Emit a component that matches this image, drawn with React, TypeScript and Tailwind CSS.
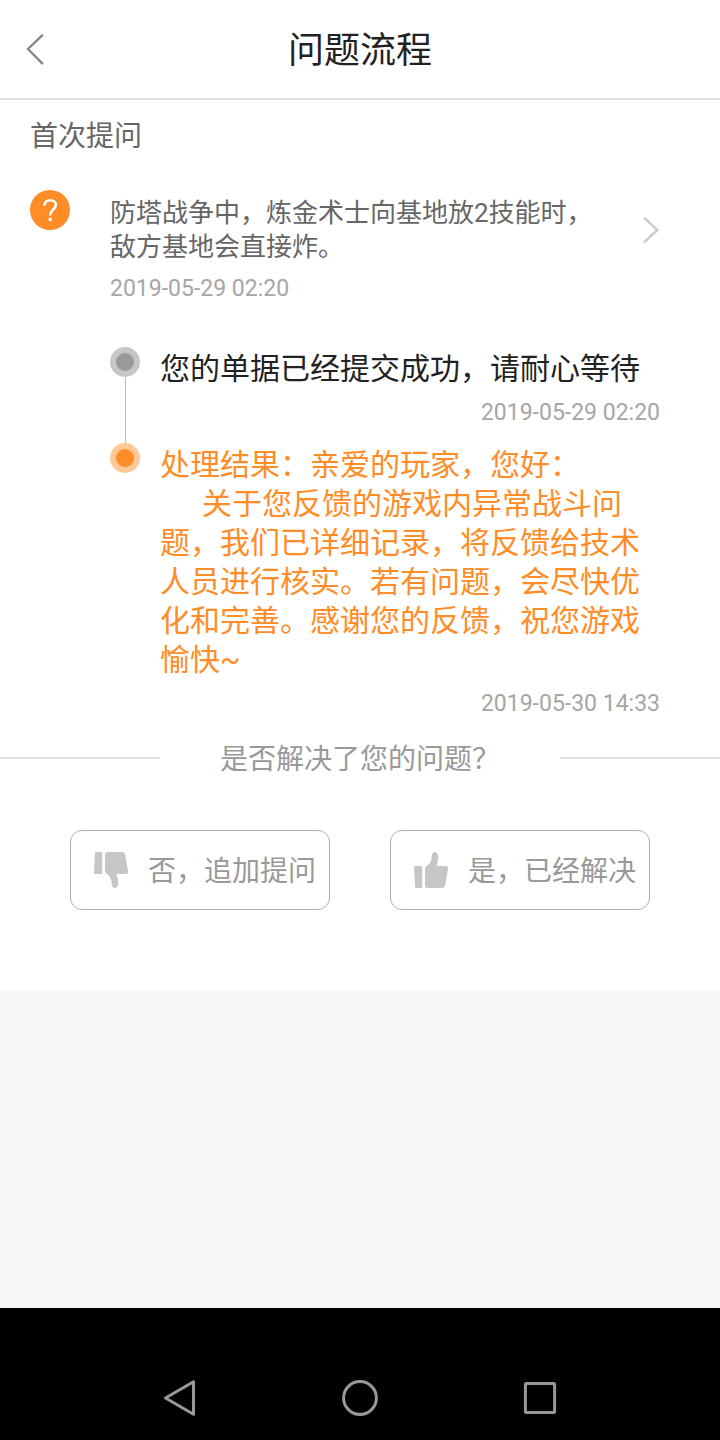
import type { ReactNode } from "react";

type Step = {
  id: number;
  lines: string[];
  date: string;
  active: boolean;
};

const steps: Step[] = [
  {
    id: 1,
    lines: ["您的单据已经提交成功，请耐心等待"],
    date: "2019-05-29 02:20",
    active: false,
  },
  {
    id: 2,
    lines: [
      "处理结果：亲爱的玩家，您好：",
      "关于您反馈的游戏内异常战斗问题，我们已详细记录，将反馈给技术人员进行核实。若有问题，会尽快优化和完善。感谢您的反馈，祝您游戏愉快~",
    ],
    date: "2019-05-30 14:33",
    active: true,
  },
];

function ThumbIcon({ down = false }: { down?: boolean }) {
  return (
    <svg
      viewBox="0 0 34 36"
      className={down ? "h-9 w-[34px] -scale-y-100" : "h-9 w-[34px]"}
      fill="#c6c6c6"
      aria-hidden="true"
    >
      <path d="M1.2 14H7Q8.2 14 8.2 15.2V34.8Q8.2 36 7 36H2.2Q1 36 1 35L0 15.2Q0 14 1.2 14Z" />
      <path d="M11 17.5Q11 15 13 13.8C16 12 17.6 8.8 17.8 4.5C17.9 1.5 19 0 20.8 0C23.3 0 24.4 2.6 24.2 6C24.1 9 23 11.3 22.6 14H31.5Q34.4 14 34 16.8L31.2 33Q30.6 36 27.8 36H14Q11 36 11 33Z" />
    </svg>
  );
}

function Header() {
  return (
    <header className="grid h-[100px] grid-cols-[100px_1fr_100px] items-center border-b-2 border-[#e2e2e2]">
      <button type="button" aria-label="返回" className="flex h-full items-center pl-[26px]">
        <svg
          viewBox="0 0 18 32"
          className="h-8 w-[18px]"
          fill="none"
          stroke="#888888"
          strokeWidth="2.4"
          strokeLinecap="round"
          aria-hidden="true"
        >
          <path d="M16.2 2.4L2 16L16.2 30.4" />
        </svg>
      </button>
      <h1 className="pt-1 text-center text-4xl text-[#222222]">问题流程</h1>
    </header>
  );
}

function Question() {
  return (
    <a href="#question" className="flex items-start pt-9 pr-[60px] pl-[30px]">
      <svg viewBox="0 0 40 40" className="size-10 shrink-0" aria-hidden="true">
        <circle cx="20" cy="20" r="20" fill="#ff8c26" />
        <path
          d="M14.4 15.8C14.4 12.2 16.8 10.2 20.1 10.2C23.5 10.2 25.8 12.2 25.8 15C25.8 19.2 20.2 19.6 20.2 25.4"
          fill="none"
          stroke="#ffffff"
          strokeWidth="2.6"
        />
        <circle cx="20.2" cy="29.4" r="1.8" fill="#ffffff" />
      </svg>
      <div className="ml-10 flex-1 pt-1.5">
        <p className="text-[26px] leading-[34px] text-[#666666]">
          防塔战争中，炼金术士向基地放2技能时，敌方基地会直接炸。
        </p>
        <time className="mt-2 block text-[23px] leading-[34px] text-[#a6a6a6]">
          2019-05-29 02:20
        </time>
      </div>
      <svg
        viewBox="0 0 18 28"
        className="mt-[26px] ml-10 h-7 w-[18px] shrink-0"
        fill="none"
        stroke="#cccccc"
        strokeWidth="2.4"
        aria-hidden="true"
      >
        <path d="M2 1.6L15.4 14L2 26.4" />
      </svg>
    </a>
  );
}

function TimelineStep({ step, last }: { step: Step; last: boolean }) {
  return (
    <li className="flex gap-5">
      <div className="flex w-[30px] shrink-0 flex-col items-center">
        <span
          className={
            step.active
              ? "flex size-[30px] shrink-0 items-center justify-center rounded-full bg-[#ffc896]"
              : "flex size-[30px] shrink-0 items-center justify-center rounded-full bg-[#c6c6c6]"
          }
        >
          <span
            className={
              step.active
                ? "size-[18px] rounded-full bg-[#ff8c26]"
                : "size-[18px] rounded-full bg-[#999999]"
            }
          />
        </span>
        {!last && <span className="w-px flex-1 bg-[#bbbbbb]" />}
      </div>
      <div className="flex-1 pt-0.5">
        <div
          className={
            step.active
              ? "text-3xl leading-[39px] text-[#ff8c26]"
              : "text-3xl leading-[39px] text-[#222222]"
          }
        >
          {step.lines.map((line, i) => (
            <p key={line} className={i > 0 ? "indent-[42px]" : undefined}>
              {line}
            </p>
          ))}
        </div>
        <time className="mt-2 block pb-[13px] text-right text-[23px] leading-[34px] text-[#a6a6a6]">
          {step.date}
        </time>
      </div>
    </li>
  );
}

function AnswerButton({ icon, children }: { icon: ReactNode; children: ReactNode }) {
  return (
    <button
      type="button"
      className="flex h-20 w-[260px] items-center gap-5 rounded-xl border border-[#b0b0b0] pl-[23px] text-[28px] whitespace-nowrap text-[#999999]"
    >
      {icon}
      <span className="pt-1">{children}</span>
    </button>
  );
}

function NavBar() {
  return (
    <nav className="flex h-[132px] items-end justify-center gap-[140px] bg-black pb-[22px]">
      <button type="button" aria-label="后退">
        <svg viewBox="0 0 40 40" className="size-10" fill="none" stroke="#999999" strokeWidth="3" aria-hidden="true">
          <path d="M5.5 20L33.5 3.8V36.2Z" strokeLinejoin="round" />
        </svg>
      </button>
      <button type="button" aria-label="主屏幕">
        <svg viewBox="0 0 40 40" className="size-10" fill="none" stroke="#999999" strokeWidth="3" aria-hidden="true">
          <circle cx="20" cy="20" r="16.4" />
        </svg>
      </button>
      <button type="button" aria-label="最近任务">
        <svg viewBox="0 0 40 40" className="size-10" fill="none" stroke="#999999" strokeWidth="3" aria-hidden="true">
          <rect x="5.4" y="5.4" width="29.2" height="29.2" rx="1" />
        </svg>
      </button>
    </nav>
  );
}

export default function App() {
  return (
    <div className="flex min-h-screen flex-col bg-[#f5f7f9] font-['Roboto','Noto_Sans_CJK_SC',sans-serif]">
      <main className="bg-white pb-20" lang="zh-CN">
        <Header />
        <h2 className="pt-[19px] pl-[30px] text-[28px] leading-[35px] text-[#666666]">首次提问</h2>
        <Question />
        <ol className="mt-[41px] pr-[60px] pl-[110px]">
          {steps.map((step, i) => (
            <TimelineStep key={step.id} step={step} last={i === steps.length - 1} />
          ))}
        </ol>
        <div className="mt-0.5 flex items-center">
          <span className="h-0.5 flex-1 bg-[#e2e2e2]" />
          <p className="mx-[60px] w-[280px] pt-1 text-[28px] leading-[40px] text-[#999999]">
            是否解决了您的问题？
          </p>
          <span className="h-0.5 flex-1 bg-[#e2e2e2]" />
        </div>
        <div className="mt-[50px] flex justify-center gap-[60px]">
          <AnswerButton icon={<ThumbIcon down />}>否，追加提问</AnswerButton>
          <AnswerButton icon={<ThumbIcon />}>是，已经解决</AnswerButton>
        </div>
      </main>
      <div className="flex-1" />
      <NavBar />
    </div>
  );
}
